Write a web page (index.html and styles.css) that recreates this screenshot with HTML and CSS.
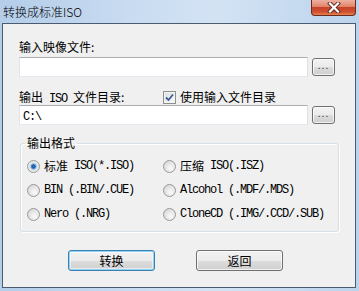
FILE: index.html
```html
<!DOCTYPE html>
<html lang="zh-CN">
<head>
    <meta charset="UTF-8">
    <title>转换成标准ISO</title>
    <link rel="stylesheet" href="styles.css">
</head>
<body>
    <div class="window">

        <div class="titlebar">
            <span class="title">转换成标准ISO</span>
            <div class="close">
                <svg width="14" height="11" viewBox="0 0 14 11">
                    <path d="M3 1.5 L11 9.5 M11 1.5 L3 9.5" stroke="#5a2a20" stroke-width="4" stroke-linecap="square"/>
                    <path d="M3 1.5 L11 9.5 M11 1.5 L3 9.5" stroke="#fff" stroke-width="2.2" stroke-linecap="square"/>
                </svg>
            </div>
        </div>

        <div class="client">

            <div class="label">输入映像文件:</div>
            <div class="path-row">
                <div class="input"></div>
                <div class="browse">...</div>
            </div>

            <div class="label-row">
                <span class="label wide">输出<span class="en"> ISO </span>文件目录:</span>
                <span class="option">
                    <span class="checkbox">
                        <svg width="11" height="11" viewBox="0 0 11 11">
                            <path d="M2 5.5 L4.5 8 L9 2.5" fill="none" stroke="#3b5b9a" stroke-width="1.8"/>
                        </svg>
                    </span>
                    使用输入文件目录
                </span>
            </div>
            <div class="path-row tight">
                <div class="input"><span class="en">C:\</span></div>
                <div class="browse">...</div>
            </div>

            <fieldset class="group">
                <legend>输出格式</legend>
                <div class="options">
                    <span class="option"><span class="radio checked"></span>标准<span class="en"> ISO(*.ISO)</span></span>
                    <span class="option"><span class="radio"></span>压缩<span class="en"> ISO(.ISZ)</span></span>
                    <span class="option"><span class="radio"></span><span class="en">BIN (.BIN/.CUE)</span></span>
                    <span class="option"><span class="radio"></span><span class="en">Alcohol (.MDF/.MDS)</span></span>
                    <span class="option"><span class="radio"></span><span class="en">Nero (.NRG)</span></span>
                    <span class="option"><span class="radio"></span><span class="en">CloneCD (.IMG/.CCD/.SUB)</span></span>
                </div>
            </fieldset>

            <div class="actions">
                <div class="btn default">转换</div>
                <div class="btn">返回</div>
            </div>

        </div>
    </div>
</body>
</html>
```

FILE: styles.css
```css
body{
    margin: 0;
    font-family: "Noto Sans CJK SC", sans-serif;
    font-size: 12px;
    color: #000;
}
.window{
    width: 359px;
    height: 291px;
    display: flex;
    flex-direction: column;
    background: linear-gradient(90deg, #b4cde9 0%, #c8dbf1 35%, #d3e3f4 60%, #bcd3ec 100%);
}
.titlebar{
    height: 23px;
    display: flex;
    justify-content: space-between;
    align-items: flex-start;
    flex-shrink: 0;
}
.title{
    padding: 4px 0 0 3px;
    line-height: 15px;
    font-weight: 300;
}
.close{
    width: 45px;
    height: 16px;
    margin-right: 3px;
    box-sizing: border-box;
    border: 1px solid #6b2a1e;
    border-top: none;
    border-radius: 0 0 4px 4px;
    background: linear-gradient(#eeb0a0 0%, #e08468 45%, #c8412b 50%, #d0502f 80%, #e8834f 100%);
    display: flex;
    align-items: center;
    justify-content: center;
}
.client{
    flex: 1;
    margin: 0 3px 3px 2px;
    border: 1px solid #4b5c70;
    background: #f0f0f0;
    padding: 16px 0 0 16px;
}
.label{
    height: 14px;
    line-height: 14px;
}
.label.wide{
    width: 144px;
}
.en{
    font-family: "Liberation Mono", monospace;
    font-size: 12px;
    letter-spacing: -1.2px;
    white-space: pre;
}
.path-row{
    display: flex;
    align-items: center;
    margin-top: 3px;
}
.path-row.tight{
    margin-top: 1px;
}
.input{
    width: 289px;
    height: 20px;
    box-sizing: border-box;
    border: 1px solid;
    border-color: #abadb3 #dbdfe6 #e3e9ef #e2e3ea;
    background: #fff;
    padding-left: 3px;
    line-height: 18px;
}
.browse, .btn{
    box-sizing: border-box;
    border: 1px solid #707070;
    border-radius: 3px;
    background: linear-gradient(#f2f2f2 0%, #ebebeb 50%, #dddddd 51%, #cfcfcf 100%);
    box-shadow: inset 0 0 0 1px rgba(255, 255, 255, 0.7);
    text-align: center;
}
.browse{
    width: 23px;
    height: 18px;
    margin-left: 4px;
    font-size: 10px;
    line-height: 12px;
    letter-spacing: 1px;
    color: #333;
}
.label-row{
    display: flex;
    margin-top: 13px;
}
.option{
    display: flex;
    align-items: center;
    height: 14px;
    line-height: 14px;
    white-space: nowrap;
}
.checkbox, .radio{
    width: 13px;
    height: 13px;
    box-sizing: border-box;
    border: 1px solid #8e8f8f;
    margin-right: 4px;
    flex-shrink: 0;
}
.checkbox{
    background: linear-gradient(135deg, #dcdcdc, #fbfbfb);
    box-shadow: inset 0 0 0 1px #f4f4f4;
}
.checkbox svg{
    display: block;
}
.radio{
    border-radius: 50%;
    border-color: #9a9a9a;
    background: radial-gradient(circle at 60% 65%, #fafafa 0%, #e3e3e3 55%, #cfcfcf 100%);
}
.radio.checked{
    background: radial-gradient(circle at 50% 50%, #2c6fb7 0%, #1b5ea5 22%, #6aaee8 32%, #e0e0e0 45%, #f4f4f4 100%);
}
.group{
    width: 319px;
    box-sizing: border-box;
    margin: 11px 0 0 1px;
    padding: 9px 0 10px 6px;
    border: 1px solid #d5dfe5;
    border-radius: 3px;
    box-shadow: inset 1px 1px 0 #fff, 1px 1px 0 #fff;
}
.group legend{
    padding: 0 2px;
    margin-left: -2px;
    line-height: 14px;
}
.options{
    display: grid;
    grid-template-columns: 136px auto;
    row-gap: 10px;
}
.actions{
    display: flex;
    gap: 41px;
    margin: 18px 0 0 49px;
}
.btn{
    width: 87px;
    height: 21px;
    line-height: 19px;
    font-size: 12px;
}
.btn.default{
    border-color: #3c7fb1;
    box-shadow: inset 0 0 0 1px #8fd3f5, inset 0 0 0 2px rgba(255, 255, 255, 0.5);
}
```
